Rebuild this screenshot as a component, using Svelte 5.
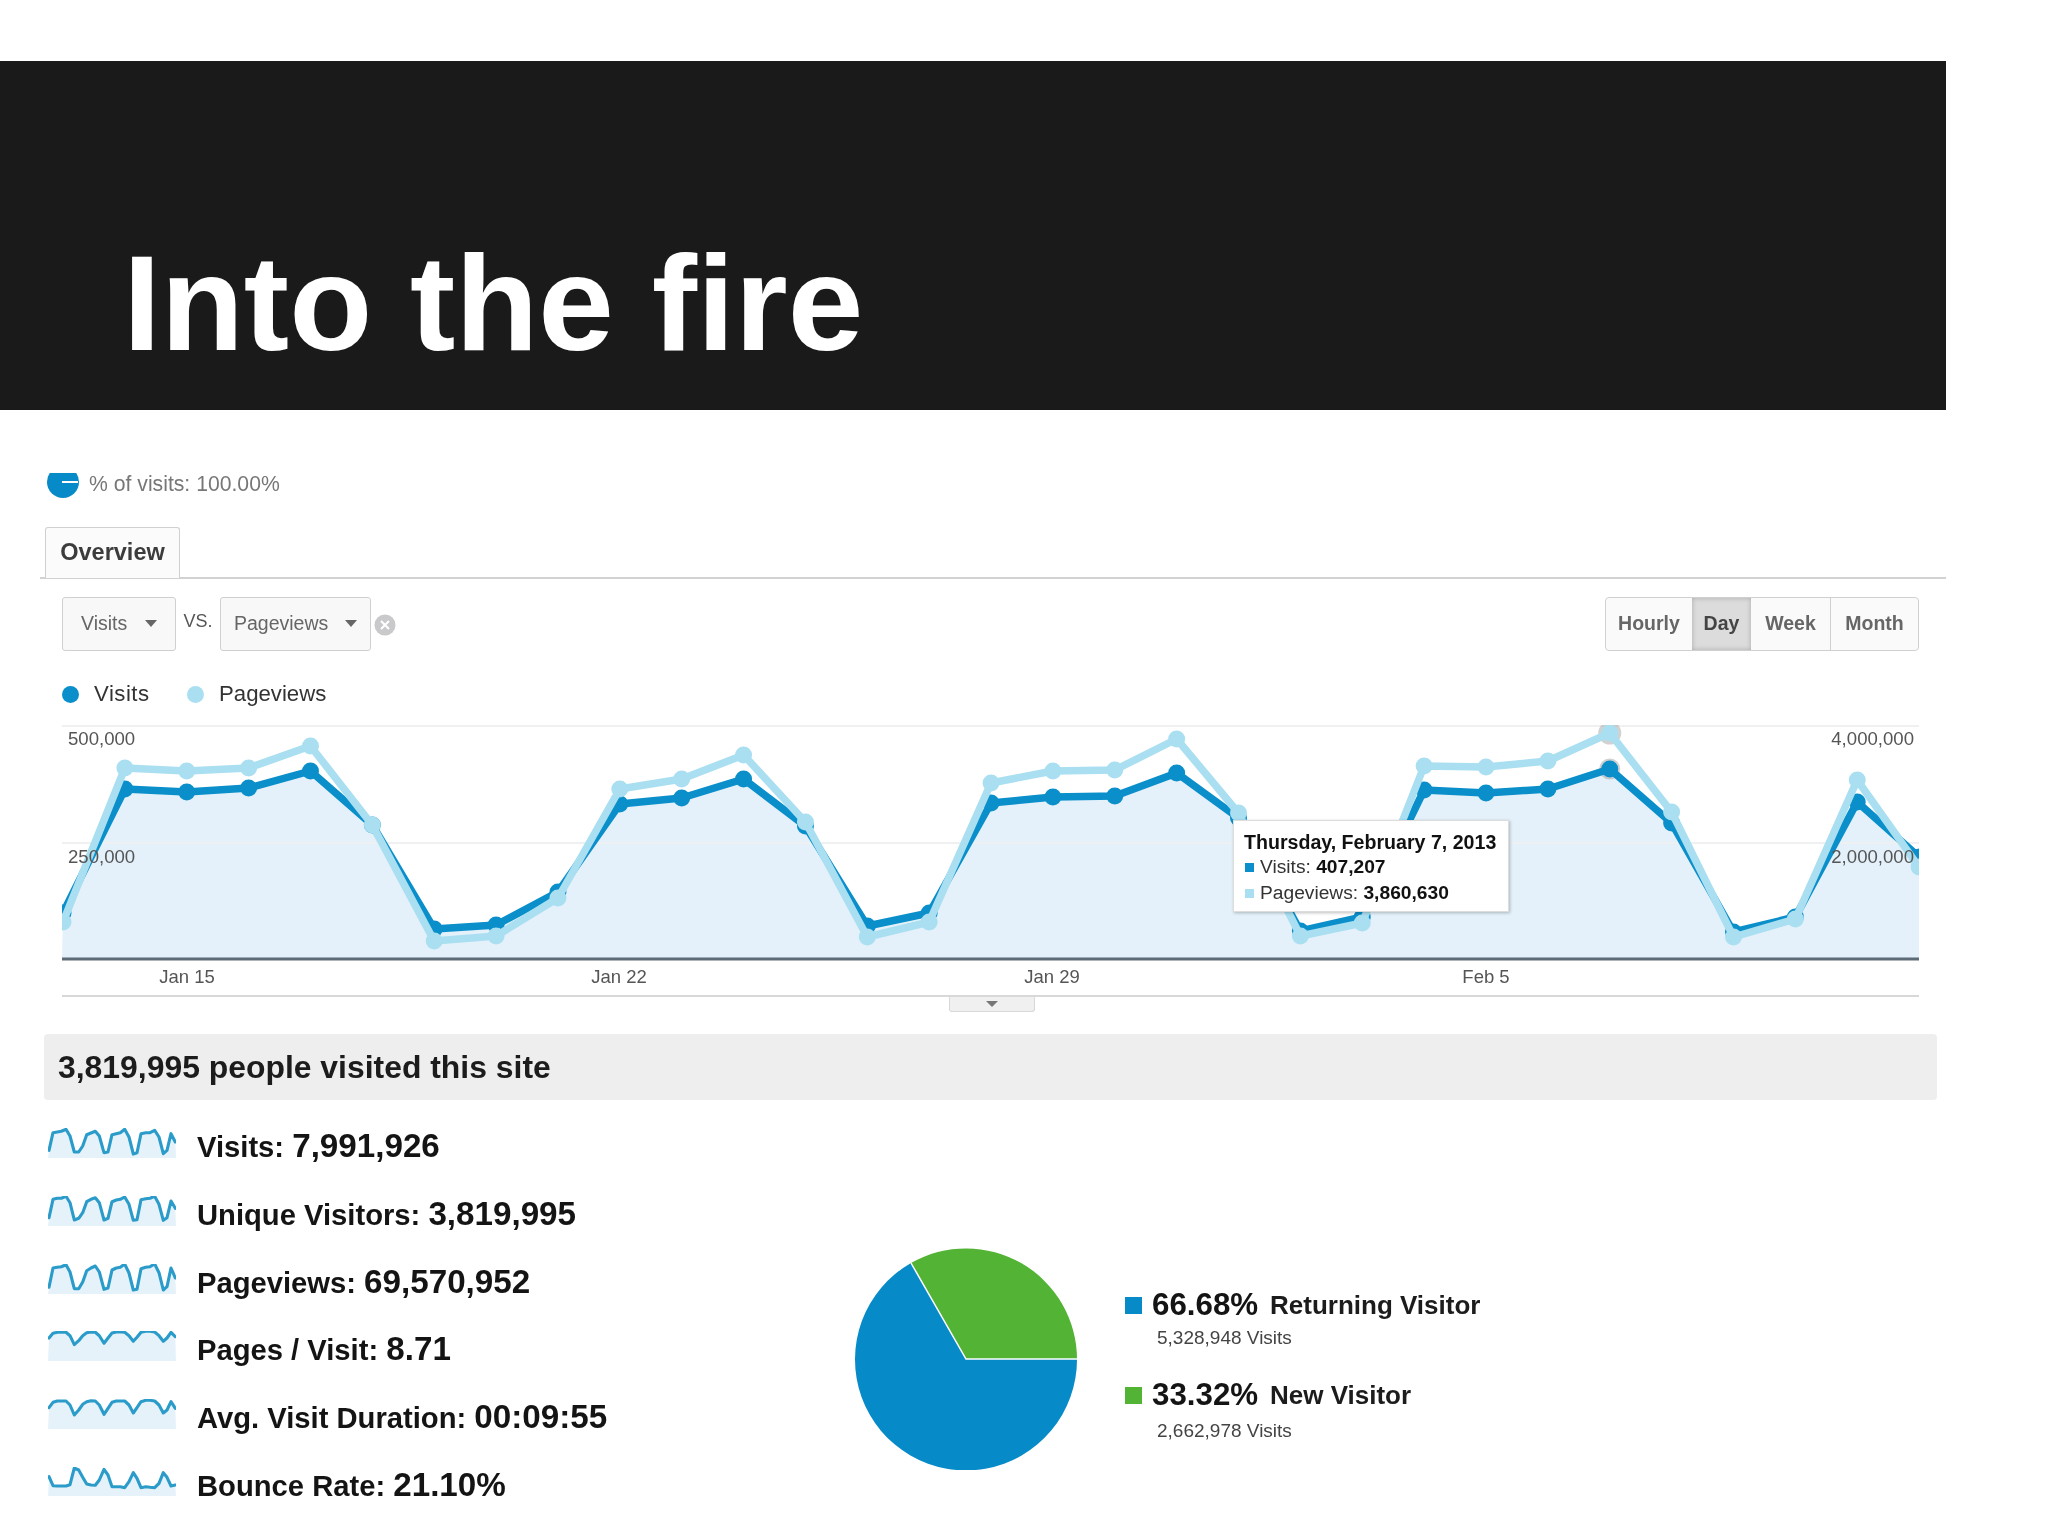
<script>
  const dark = [913,789,792,788,771,825,929,925,892,804,798,779,826,926,913,803,797,796,773,818,931,917,790,793,789,769,823,932,917,802,857];
  const light = [922,768,771,768,746,825,941,936,898,789,779,755,822,937,922,783,771,770,739,813,936,923,766,767,761,733,812,937,919,780,867];
  const top = 725;
  const W = 1857;
  const H = 233;
  const px = (i) => 1 + 61.87 * i;
  const line = (arr) => arr.map((y, i) => `${px(i).toFixed(1)},${y - top}`).join(' ');
  const area = `0,${H} ${line(dark)} ${W},${H}`;

  const xs = [15,27,40,52,66,78,91,104,116,128,141,154,166,180,192,204,217,229,242,255,268,279,291,305,318,332,345,358,369,381,394];
  const spark = (ys, origin) => ys.map((y, i) => `${((xs[i] - 12) / 3).toFixed(1)},${((y - origin) / 3).toFixed(1)}`).join(' ');

  const metrics = [
    { label: 'Visits:', value: '7,991,926', pts: spark([85,32,30,28,22,42,90,90,72,38,33,28,42,92,90,38,35,32,22,45,96,92,35,32,32,25,45,95,85,35,60], 18) },
    { label: 'Unique Visitors:', value: '3,819,995', pts: spark([290,235,232,232,226,245,297,292,275,242,235,230,245,297,292,242,237,235,228,250,298,296,236,233,232,226,250,298,290,240,262], 225) },
    { label: 'Pageviews:', value: '69,570,952', pts: spark([88,30,28,26,20,42,92,92,72,38,30,24,42,94,90,36,30,28,18,45,96,94,32,28,26,18,44,96,86,30,60], 18) },
    { label: 'Pages / Visit:', value: '8.71', pts: spark([42,28,25,25,25,35,62,50,35,26,24,25,35,58,42,27,24,24,25,35,52,40,25,22,22,24,35,52,42,25,38], 21) },
    { label: 'Avg. Visit Duration:', value: '00:09:55', pts: spark([248,232,228,228,228,240,270,255,238,230,227,228,240,268,250,232,228,228,228,240,264,248,230,226,226,228,240,264,255,230,250], 222) },
    { label: 'Bounce Rate:', value: '21.10%', pts: spark([50,77,78,78,78,74,24,30,52,72,75,76,60,28,45,80,80,80,83,65,38,55,83,80,82,83,70,38,52,78,75], 21) }
  ].map((m) => ({ ...m, fill: `0,30 ${m.pts} 128,30` }));
</script>

<div class="slide">
  <header class="banner"><h1>Into the fire</h1></header>

  <div class="shot">
    <div class="segment">
      <svg width="32" height="25" viewBox="0 0 32 25"><circle cx="16" cy="9" r="16" fill="#078bc8"/><rect x="15" y="8" width="16" height="2" fill="#fff"/></svg>
      <span>% of visits: 100.00%</span>
    </div>

    <div class="tabs"><div class="tab">Overview</div></div>

    <div class="controls">
      <div class="picker">
        <div class="select s1"><span>Visits</span><i class="caret"></i></div>
        <span class="vs">VS.</span>
        <div class="select s2"><span>Pageviews</span><i class="caret"></i></div>
        <svg class="clear" width="22" height="22" viewBox="0 0 22 22"><circle cx="11" cy="11" r="10.5" fill="#c9c9cc"/><path d="M7 7l8 8M15 7l-8 8" stroke="#fff" stroke-width="2"/></svg>
      </div>
      <div class="range">
        <span class="r-h">Hourly</span><span class="r-d">Day</span><span class="r-w">Week</span><span class="r-m">Month</span>
      </div>
    </div>

    <div class="legend">
      <i class="dot d1"></i><span class="l1">Visits</span>
      <i class="dot d2"></i><span>Pageviews</span>
    </div>

    <div class="chart">
      <svg class="plot" width={W} height={H + 3} viewBox="0 0 {W} {H + 3}">
        <line x1="0" x2={W} y1="1" y2="1" stroke="#f0f0f0" stroke-width="2"/>
        <polygon points={area} fill="#e4f1fa"/>
        <line x1="0" x2={W} y1="118" y2="118" stroke="#eef0f1" stroke-width="2"/>
        <circle cx={px(25)} cy={dark[25] - top} r="10.5" fill="#9a9a9a" opacity=".45"/>
        <polyline points={line(dark)} fill="none" stroke="#0a8fca" stroke-width="7.5" stroke-linejoin="round"/>
        {#each dark as y, i}<circle cx={px(i)} cy={y - top} r="8.5" fill="#0a8fca"/>{/each}
        <circle cx={px(25)} cy={light[25] - top} r="11.5" fill="#9a9a9a" opacity=".45"/>
        <polyline points={line(light)} fill="none" stroke="#a9dff1" stroke-width="7.5" stroke-linejoin="round"/>
        {#each light as y, i}<circle cx={px(i)} cy={y - top} r="8.5" fill="#a9dff1"/>{/each}
        <line x1="0" x2={W} y1={H + 1} y2={H + 1} stroke="#5c6b76" stroke-width="3"/>
      </svg>
      <span class="yl ya">500,000</span>
      <span class="yl yb">250,000</span>
      <span class="yr ya">4,000,000</span>
      <span class="yr yb">2,000,000</span>
      <div class="ticks">
        <span>Jan 15</span><span>Jan 22</span><span>Jan 29</span><span>Feb 5</span>
      </div>
      <div class="tooltip">
        <b class="tip-title">Thursday, February 7, 2013</b>
        <div class="tip-row"><i class="sw sw1"></i>Visits: <b>407,207</b></div>
        <div class="tip-row"><i class="sw sw2"></i>Pageviews: <b>3,860,630</b></div>
      </div>
    </div>
    <div class="handle"><i></i></div>

    <div class="summary">3,819,995 people visited this site</div>

    <div class="lower">
      <div class="metrics">
        {#each metrics as m}
          <div class="metric">
            <svg class="spark" width="128" height="30" viewBox="0 0 128 30">
              <polygon points={m.fill} fill="#e6f2fa"/>
              <polyline points={m.pts} fill="none" stroke="#2b9cca" stroke-width="3.1" stroke-linejoin="round" stroke-linecap="round"/>
            </svg>
            <div class="mtext">{m.label} <span>{m.value}</span></div>
          </div>
        {/each}
      </div>
      <svg class="pie" width="224" height="222" viewBox="0 0 224 222">
        <path d="M112 111 L223 111 A111 111 0 1 1 57 15 Z" fill="#078bc8"/>
        <path d="M112 111 L57 15 A111 111 0 0 1 223 111 Z" fill="#52b334"/>
        <path d="M57 15 L112 111 L223 111" fill="none" stroke="#fff" stroke-width="1.5"/>
      </svg>
      <div class="types">
        <div class="type"><i class="sq blue"></i><strong>66.68%</strong><em>Returning Visitor</em></div>
        <div class="sub">5,328,948 Visits</div>
        <div class="type t2"><i class="sq green"></i><strong>33.32%</strong><em>New Visitor</em></div>
        <div class="sub s2nd">2,662,978 Visits</div>
      </div>
    </div>
  </div>
</div>

<style>
  :global(body) { margin: 0; background: #fff; }
  .slide {
    width: 2048px; height: 1536px; padding-top: 61px; box-sizing: border-box; overflow: hidden;
    background: #fff; font-family: "Liberation Sans", Arial, sans-serif; color: #333;
  }
  .banner {
    width: 1946px; height: 349px; box-sizing: border-box; background: #1a1a1a;
    display: flex; align-items: flex-end; padding: 0 0 39px 123px;
  }
  h1 { margin: 0; font-size: 136px; line-height: 1; font-weight: 700; color: #fff; }

  .shot { filter: blur(.45px); }

  .segment {
    margin-top: 63px; padding-left: 47px; height: 25px; display: flex; align-items: flex-start; gap: 10px;
    font-size: 21.2px; color: #777; line-height: 22px;
  }

  .tabs {
    margin: 29px 0 0 40px; width: 1906px; padding-left: 5px; box-sizing: border-box; height: 52px;
    border-bottom: 2px solid #d2d2d2; display: flex;
  }
  .tab {
    width: 135px; height: 51px; box-sizing: border-box; border: 1px solid #d0d0d0; border-bottom: 0;
    border-radius: 3px 3px 0 0; background: #fbfbfb; text-align: center; line-height: 48px;
    font-size: 23.5px; font-weight: 700; color: #3c3c3c;
  }

  .controls {
    width: 1946px; box-sizing: border-box; margin-top: 18px; padding: 0 27px 0 62px; height: 54px;
    display: flex; justify-content: space-between;
  }
  .picker { display: flex; align-items: center; }
  .select {
    height: 54px; box-sizing: border-box; border: 1.5px solid #d0d0d0; border-radius: 3px; background: #f8f8f8;
    display: flex; align-items: center; font-size: 19.5px; line-height: 20px; color: #666; padding-bottom: 2px;
  }
  .s1 { width: 114px; padding-left: 18px; }
  .s1 .caret { margin-left: 18px; }
  .s2 { width: 151px; padding-left: 13px; }
  .s2 .caret { margin-left: 17px; }
  .caret { width: 0; height: 0; border: 6px solid transparent; border-top: 7px solid #666; border-bottom: 0; }
  .vs { width: 44px; text-align: center; font-size: 18px; color: #555; margin-top: -6px; }
  .clear { margin-left: 3px; margin-top: 2px; }
  .range {
    display: flex; height: 54px; box-sizing: border-box; border: 1.5px solid #d0d0d0; border-radius: 4px;
    background: #fafafa; font-size: 19.5px; font-weight: 700; color: #666; line-height: 50px; text-align: center;
  }
  .r-h { width: 86px; }
  .r-d { width: 59px; background: #dcdcdc; color: #444; box-shadow: inset 0 0 5px #aaa; }
  .r-w { width: 80px; border-right: 1.5px solid #d0d0d0; box-sizing: border-box; }
  .r-m { width: 87px; }

  .legend {
    margin: 32px 0 0 62px; height: 22px; display: flex; align-items: center; font-size: 22.2px; line-height: 22px; color: #333;
  }
  .dot { width: 17px; height: 17px; border-radius: 50%; margin-right: 15px; }
  .d1 { background: #0a8fca; }
  .d2 { background: #a9dff1; }
  .l1 { width: 60px; margin-right: 33px; white-space: nowrap; letter-spacing: .5px; }

  .chart { position: relative; margin: 20px 0 0 62px; width: 1857px; height: 272px; border-bottom: 2px solid #d8d8d8; box-sizing: border-box; }
  .plot { display: block; }
  .yl, .yr { position: absolute; font-size: 18.6px; line-height: 20px; color: #555; }
  .yl { left: 6px; }
  .yr { right: 5px; }
  .ya { top: 4px; }
  .yb { top: 122px; }
  .ticks { position: absolute; left: 0; top: 242px; width: 100%; height: 20px; font-size: 18.5px; line-height: 20px; color: #555; }
  .ticks span { position: absolute; transform: translateX(-50%); white-space: nowrap; }
  .ticks span:nth-child(1) { left: 125px; }
  .ticks span:nth-child(2) { left: 557px; }
  .ticks span:nth-child(3) { left: 990px; }
  .ticks span:nth-child(4) { left: 1424px; }
  .tooltip {
    position: absolute; left: 1171px; top: 95px; width: 276px; height: 92px; box-sizing: border-box;
    background: #fff; border: 1px solid #ddd; box-shadow: 1px 1px 3px rgba(0,0,0,.25);
    padding: 10px 0 0 10px; font-size: 19.2px; line-height: 22px; color: #222; white-space: nowrap;
  }
  .tooltip b { font-weight: 700; color: #111; }
  .tooltip .tip-title { font-size: 19.6px; }
  .tip-row { display: flex; align-items: center; gap: 6px; margin-top: 2px; white-space: pre; color: #333; padding-left: 1px; }
  .tip-row + .tip-row { margin-top: 4px; }
  .tip-row b { margin-left: -6px; }
  .sw { width: 9px; height: 9px; }
  .sw1 { background: #0a8fca; }
  .sw2 { background: #a9dff1; }
  .handle {
    width: 86px; height: 15px; margin-left: 949px; box-sizing: border-box; background: #f0f0f0;
    border: 1px solid #d8d8d8; border-top: 0; border-radius: 0 0 3px 3px; display: flex; justify-content: center; padding-top: 4px;
  }
  .handle i { width: 0; height: 0; border: 6px solid transparent; border-top: 6px solid #777; border-bottom: 0; }

  .summary {
    width: 1893px; height: 66px; margin: 22px 0 0 44px; padding-left: 14px; box-sizing: border-box;
    background: #eeeeee; border-radius: 4px; font-size: 31.9px; line-height: 66px; font-weight: 700; color: #1c1c1c; white-space: nowrap;
  }

  .lower { height: 396px; overflow: hidden; display: flex; align-items: flex-start; }
  .metrics { width: 854px; box-sizing: border-box; padding: 28px 0 0 48px; display: flex; flex-direction: column; gap: 37.8px; flex: none; }
  .metric { height: 30px; display: flex; gap: 21px; align-items: flex-start; }
  .spark { flex: none; }
  .mtext { font-size: 29.2px; line-height: 36px; font-weight: 700; color: #141414; white-space: nowrap; }
  .mtext span { font-size: 33.2px; }
  .pie { flex: none; margin-top: 148px; }
  .types { margin: 187px 0 0 47px; color: #222; }
  .type { height: 36px; display: flex; align-items: center; white-space: nowrap; }
  .t2 { margin-top: 27px; }
  .sq { width: 17px; height: 17px; margin-right: 10px; flex: none; }
  .blue { background: #078bc8; }
  .green { background: #52b334; }
  .type strong { font-size: 31.3px; font-weight: 700; color: #141414; width: 118px; }
  .type em { font-style: normal; font-size: 26px; font-weight: 700; color: #1c1c1c; }
  .sub { margin: 3px 0 0 32px; height: 24px; font-size: 19px; line-height: 24px; color: #444; }
  .s2nd { margin-top: 6px; }
</style>
